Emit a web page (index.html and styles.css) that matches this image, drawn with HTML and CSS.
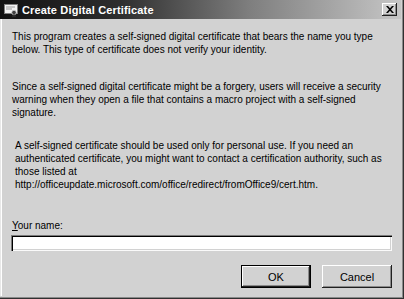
FILE: index.html
```html
<!DOCTYPE html>
<html lang="en">
<head>
	<meta charset="UTF-8">
	<title>Create Digital Certificate</title>
	<link rel="stylesheet" href="styles.css">
</head>
<body>
  <div class="window">
  	<div class="titlebar">
  		<svg class="title-icon" width="16" height="16" viewBox="0 0 16 16">
  			<rect x="1.5" y="2.5" width="13" height="9" fill="#f4f4f4" stroke="#808080"/>
  			<line x1="3" y1="5" x2="12" y2="5" stroke="#9a9a9a"/>
  			<line x1="3" y1="7" x2="9" y2="7" stroke="#9a9a9a"/>
  			<circle cx="11" cy="10.5" r="2.3" fill="#404040" stroke="#dcdcdc" stroke-width="0.8"/>
  			<path d="M9.8 12.5 L9 15.5 L10.5 14.6 L11 15.8 L11.6 14.6 L13 15.5 L12.2 12.5" fill="#303030"/>
  		</svg>
  		<span class="title">Create Digital Certificate</span>
  		<button class="close-btn">
  			<svg width="8" height="7" viewBox="0 0 8 7">
  				<path d="M0 0h2l2 2.3L6 0h2L5 3.5 8 7H6L4 4.7 2 7H0l3-3.5z" fill="#000"/>
  			</svg>
  		</button>
  	</div>
  	<div class="content">
  		<p class="intro">This program creates a self-signed digital certificate that bears the name you type<br>below. This type of certificate does not verify your identity.</p>
  		<p class="warning">Since a self-signed digital certificate might be a forgery, users will receive a security<br>warning when they open a file that contains a macro project with a self-signed<br>signature.</p>
  		<p class="note">A self-signed certificate should be used only for personal use. If you need an<br>authenticated certificate, you might want to contact a certification authority, such as<br>those listed at<br>http://officeupdate.microsoft.com/office/redirect/fromOffice9/cert.htm.</p>
  		<label class="name-label" for="name"><u>Y</u>our name:</label>
  		<input class="name-input" id="name" type="text">
  		<div class="actions">
  			<button class="btn btn-default">OK</button>
  			<button class="btn">Cancel</button>
  		</div>
  	</div>
  </div>
</body>
</html>
```
FILE: styles.css
```css
body {
	margin: 0;
	background: #d2d2d2;
	font-family: 'Liberation Sans', Arial, sans-serif;
	font-size: 10px;
	color: #000;
}
.window {
	width: 404px;
	height: 299px;
	box-sizing: border-box;
	padding: 0 3px 3px 0;
	background: #d2d2d2;
	box-shadow: inset -1px -1px 0 #303030, inset -2px -2px 0 #8a8a8a;
	display: flex;
	flex-direction: column;
}

/* title bar */
.titlebar {
	height: 19px;
	display: flex;
	align-items: center;
	background: linear-gradient(to right, #121212 0%, #2e2e2e 30%, #7e7e7e 62%, #c6c6c6 100%);
}
.title-icon {
	margin: 0 3px 0 3px;
	flex: none;
}
.title {
	flex: 1;
	color: #fff;
	font-size: 11px;
	font-weight: bold;
	letter-spacing: 0.15px;
}
.close-btn {
	width: 15px;
	height: 13px;
	margin-right: 4px;
	padding: 0;
	display: flex;
	align-items: center;
	justify-content: center;
	background: #d2d2d2;
	border: 0;
	box-shadow: inset -1px -1px 0 #202020, inset 1px 1px 0 #fff, inset -2px -2px 0 #8a8a8a;
}

/* body */
.content {
	flex: 1;
	display: flex;
	flex-direction: column;
	padding: 11px 9px 0 11px;
	box-shadow: inset 1px 0 0 #e8e8e8, inset 2px 0 0 #fff;
}
.content p {
	margin: 0;
	line-height: 13px;
	white-space: nowrap;
}
.intro {
	padding-left: 1px;
}
.warning {
	margin-top: 24px !important;
	padding-left: 1px;
}
.note {
	margin-top: 20px !important;
	padding-left: 4px;
}
.name-label {
	margin-top: 28px;
	padding-left: 1px;
	line-height: 13px;
}
.name-input {
	margin-top: 3px;
	width: 381px;
	height: 16px;
	box-sizing: border-box;
	padding: 0 3px;
	border: 0;
	outline: none;
	background: #fff;
	box-shadow: inset 1px 1px 0 #7a7a7a, inset 2px 2px 0 #000, inset -1px -1px 0 #fafafa, inset -2px -2px 0 #d2d2d2;
}

/* buttons */
.actions {
	display: flex;
	justify-content: flex-end;
	gap: 11px;
	margin-top: 14px;
}
.btn {
	width: 70px;
	height: 23px;
	padding: 0;
	border: 0;
	background: #d2d2d2;
	font-family: 'Liberation Sans', Arial, sans-serif;
	font-size: 11px;
	color: #000;
	box-shadow: inset -1px -1px 0 #202020, inset 1px 1px 0 #fff, inset -2px -2px 0 #8a8a8a;
}
.btn-default {
	box-shadow: inset 0 0 0 1px #000, inset -2px -2px 0 #202020, inset 2px 2px 0 #fff, inset -3px -3px 0 #8a8a8a;
}
```
